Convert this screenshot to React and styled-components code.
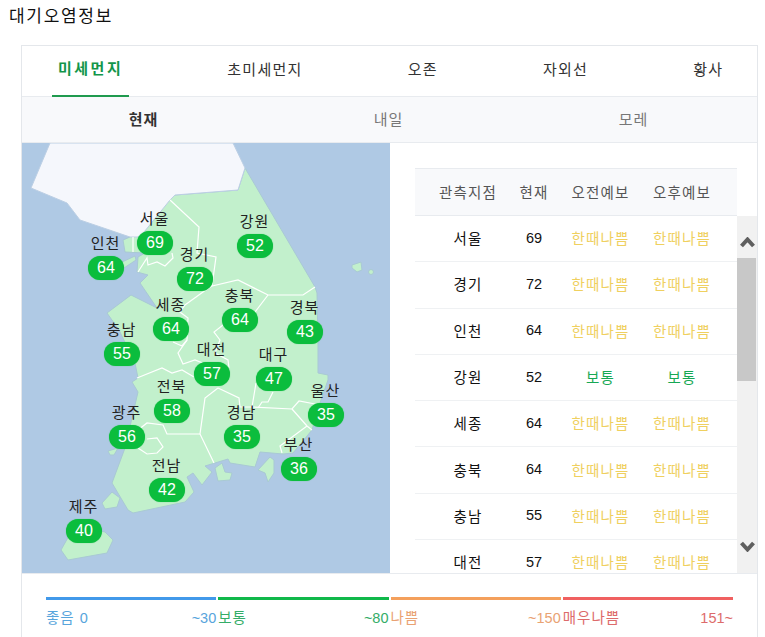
import React from "react";
import styled, { createGlobalStyle } from "styled-components";

const Global = createGlobalStyle`
  html, body { margin: 0; padding: 0; background: #fff; overflow: hidden; height: 637px; }
  * { box-sizing: border-box; }
  body { font-family: "Liberation Sans", "Noto Sans CJK KR", sans-serif; }
`;

const Page = styled.div`
  width: 765px;
  height: 637px;
  overflow: hidden;
  padding: 0 7px 0 21px;
`;
const Title = styled.h2`
  margin: 0 0 0 -12px;
  height: 45px;
  padding-top: 6px;
  font-size: 17px;
  line-height: 22px;
  font-weight: 400;
  letter-spacing: 1.7px;
  color: #111;
`;
const Card = styled.section`
  width: 737px;
  border: 1px solid #e4e7eb;
  height: 640px;
`;
const Tabs = styled.nav`
  display: flex;
  gap: 90px;
  height: 51px;
  padding-left: 30px;
  border-bottom: 1px solid #e8ebef;
`;
const Tab = styled.div`
  height: 51px;
  padding: ${(p) => (p.$active ? "0 6px 7px" : "0 7px 7px 8px")};
  display: flex;
  align-items: center;
  font-size: 15px;
  letter-spacing: ${(p) => (p.$active ? "2.5px" : "1.3px")};
  color: ${(p) => (p.$active ? "#12964a" : "#333")};
  font-weight: ${(p) => (p.$active ? 700 : 400)};
  border-bottom: ${(p) => (p.$active ? "2px solid #1f9a4e" : "none")};
`;
const SubTabs = styled.div`
  display: grid;
  grid-template-columns: repeat(3, 245px);
  height: 46px;
  background: #f8f9fb;
  border-bottom: 1px solid #e8ebef;
`;
const SubTab = styled.div`
  display: flex;
  align-items: center;
  justify-content: center;
  padding: 0 2px 2px 0;
  font-size: 15px;
  letter-spacing: 1px;
  color: ${(p) => (p.$active ? "#333" : "#777")};
  font-weight: ${(p) => (p.$active ? 700 : 400)};
`;
const Main = styled.div`
  display: flex;
  height: 430px;
`;
const MapPane = styled.div`
  position: relative;
  width: 368px;
  height: 430px;
  flex: none;
  background: #afc9e4;
  overflow: hidden;
`;
const MapArt = styled.svg`
  display: block;
  width: 368px;
  height: 430px;
`;
const Pin = styled.div`
  position: absolute;
  left: ${(p) => p.$x - 22 - 25}px;
  top: ${(p) => p.$y - 143 - 36}px;
  width: 50px;
  display: flex;
  flex-direction: column;
  align-items: center;
`;
const PinName = styled.div`
  height: 24px;
  line-height: 24px;
  font-size: 15px;
  letter-spacing: 1px;
  margin-left: -1px;
  color: #222;
  white-space: nowrap;
`;
const PinValue = styled.div`
  width: 36px;
  height: 24px;
  border-radius: 12px;
  background: #0bbd3d;
  box-shadow: 0 0 1px #3fc765;
  color: #fff;
  font-size: 16px;
  line-height: 24px;
  text-align: center;
`;
const TablePane = styled.div`
  flex: 1;
  padding: 25px 0 0 25px;
  display: flex;
  flex-direction: column;
  min-width: 0;
`;
const gridCols = `
  display: grid;
  grid-template-columns: 60px 30px 61px 60px;
  column-gap: 21px;
  padding-left: 23px;
  align-items: center;
  justify-items: center;
`;
const HeadRow = styled.div`
  ${gridCols}
  width: 322px;
  height: 48px;
  flex: none;
  padding-bottom: 2px;
  background: #f8f9fb;
  border-top: 1px solid #e8ebef;
  border-bottom: 1px solid #e8ebef;
`;
const HeadCell = styled.div`
  font-size: 14.5px;
  letter-spacing: 1.1px;
  color: #555;
  white-space: nowrap;
`;
const BodyWrap = styled.div`
  display: flex;
  flex: 1;
  min-height: 0;
  overflow: hidden;
`;
const Rows = styled.div`
  width: 322px;
  flex: none;
  overflow: hidden;
`;
const Row = styled.div`
  ${gridCols}
  height: 46.3px;
  padding-bottom: 2px;
  border-bottom: 1px solid #eff1f3;
`;
const Place = styled.div`
  font-size: 14.5px;
  letter-spacing: 1.1px;
  color: #111;
  white-space: nowrap;
`;
const Num = styled.div`
  font-size: 14.5px;
  color: #111;
`;
const Grade = styled.div`
  font-size: 14.5px;
  letter-spacing: 1.1px;
  white-space: nowrap;
  color: ${(p) => (p.$tone === "normal" ? "#17a854" : "#efd05f")};
`;
const Scrollbar = styled.div`
  width: 20px;
  flex: none;
  background: #f1f1f1;
  display: flex;
  flex-direction: column;
`;
const Arrow = styled.div`
  height: 42px;
  flex: none;
  display: flex;
  justify-content: center;
  align-items: ${(p) => (p.$down ? "flex-end" : "flex-start")};
  padding: ${(p) => (p.$down ? "0 0 21px" : "21px 0 0")};
`;
const Thumb = styled.div`
  height: 123px;
  width: 19px;
  background: #c8c8c8;
  flex: none;
`;
const Spacer = styled.div`
  flex: 1;
`;
const Legend = styled.div`
  display: grid;
  grid-template-columns: repeat(4, 1fr);
  gap: 2px;
  padding: 23px 24px 0;
  border-top: 1px solid #e8ebef;
`;
const LegendItem = styled.div`
  border-top: 3px solid ${(p) => p.$bar};
  padding-top: 8px;
  display: flex;
  justify-content: space-between;
  font-size: 14.5px;
  line-height: 20px;
  color: ${(p) => p.$text};
  white-space: nowrap;
`;
const LegendName = styled.span`
  letter-spacing: 1px;
`;

const land =
  "M170 200L175 195L238 190L245 168L315 287L317 293L318 345L318 373L328 375L328 380L320 403L312 430L293 453L283 454L260 452L255 467L230 463L228 459L215 463L205 466L212 472L202 485L193 473L187 477L194 492L185 502L133 513L128 510L112 483L125 448L138 392L132 382L138 378L135 363L119 330L107 313L131 295L157 308L140 283L148 275L137 272L138 257L145 253L125 252L123 240L130 237Z";
const islands = [
  "M122 262L135 256L136 260L124 268Z",
  "M352 265L361 262L362 270L357 272L352 268Z",
  "M61 550L68 560L107 553L113 540L105 532L75 525Z",
  "M102 503L112 492L120 498L117 507L105 509Z",
  "M108 451L118 448L114 455L110 455Z",
  "M215 468L222 463L225 472L232 473L230 480L218 481Z",
  "M258 470L270 457L274 460L274 473L268 482L265 473Z",
];
const north =
  "M50 143L31 188L67 203L80 220L130 237L140 237L170 200L175 195L238 190L245 168L233 143Z";
const borders = [
  "M170 200L199 227L197 253L216 257L212 286L238 280L268 295L303 295L315 287",
  "M212 286L203 292L185 305L180 312L188 318L187 340L178 353L183 364L195 360L210 366",
  "M133 237L133 252",
  "M138 272L147 258L148 265L157 262L165 266L173 258L172 253",
  "M268 295L255 312L223 325L214 332L220 340L215 353L228 360L229 368",
  "M173 342L182 346L187 340",
  "M137 378L162 368L172 373L182 370L194 377",
  "M218 388L205 398L200 434L214 463",
  "M200 434L167 434L163 425L147 423L138 430",
  "M147 439L157 438L163 447L157 453L147 454L138 448",
  "M218 388L239 398L240 407L252 407L292 409L299 401L315 404",
  "M256 383L252 407",
  "M273 392L268 402L262 402L258 408",
  "M292 409L307 426L312 430",
  "M307 426L280 446L282 453",
];

const pins = [
  ["서울", 69, 155, 243], ["강원", 52, 255, 246], ["인천", 64, 106, 268],
  ["경기", 72, 195, 279], ["세종", 64, 171, 329], ["충북", 64, 240, 320],
  ["경북", 43, 305, 332], ["충남", 55, 122, 354], ["대전", 57, 212, 374],
  ["대구", 47, 274, 379], ["전북", 58, 172, 411], ["울산", 35, 326, 415],
  ["광주", 56, 127, 437], ["경남", 35, 242, 437], ["부산", 36, 299, 469],
  ["전남", 42, 167, 490], ["제주", 40, 84, 531],
];
const rows = [
  ["서울", 69, "한때나쁨"], ["경기", 72, "한때나쁨"], ["인천", 64, "한때나쁨"],
  ["강원", 52, "보통"], ["세종", 64, "한때나쁨"], ["충북", 64, "한때나쁨"],
  ["충남", 55, "한때나쁨"], ["대전", 57, "한때나쁨"],
];
const legend = [
  ["좋음 0", "~30", "#4199ea", "#58a5dc"],
  ["보통", "~80", "#10b84a", "#35ad68"],
  ["나쁨", "~150", "#f4a05c", "#e9a273"],
  ["매우나쁨", "151~", "#f06060", "#dd6b6b"],
];

const Chevron = ({ down }) => (
  <svg width="15" height="11" viewBox="0 0 15 11">
    <polyline
      points={down ? "1.5,2 7.5,8.5 13.5,2" : "1.5,9 7.5,2.5 13.5,9"}
      fill="none"
      stroke="#5f5f5f"
      strokeWidth="4"
    />
  </svg>
);

export default function App() {
  return (
    <Page>
      <Global />
      <Title>대기오염정보</Title>
      <Card>
        <Tabs>
          <Tab $active>미세먼지</Tab>
          <Tab>초미세먼지</Tab>
          <Tab>오존</Tab>
          <Tab>자외선</Tab>
          <Tab>황사</Tab>
        </Tabs>
        <SubTabs>
          <SubTab $active>현재</SubTab>
          <SubTab>내일</SubTab>
          <SubTab>모레</SubTab>
        </SubTabs>
        <Main>
          <MapPane>
            <MapArt viewBox="22 143 368 430">
              <path d={land} fill="#c2f0cc" stroke="#a9c9d4" strokeLinejoin="round" />
              {islands.map((d) => (
                <path key={d} d={d} fill="#c2f0cc" stroke="#a9c9d4" strokeLinejoin="round" />
              ))}
              <circle cx="371" cy="272" r="2.5" fill="#c2f0cc" stroke="#a9c9d4" />
              <path d={north} fill="#f5f7fc" stroke="#bccfe4" strokeLinejoin="round" />
              {borders.map((d) => (
                <path key={d} d={d} fill="none" stroke="#fff" strokeWidth="1.2" />
              ))}
            </MapArt>
            {pins.map(([name, v, x, y]) => (
              <Pin key={name} $x={x} $y={y}>
                <PinName>{name}</PinName>
                <PinValue>{v}</PinValue>
              </Pin>
            ))}
          </MapPane>
          <TablePane>
            <HeadRow>
              <HeadCell>관측지점</HeadCell>
              <HeadCell>현재</HeadCell>
              <HeadCell>오전예보</HeadCell>
              <HeadCell>오후예보</HeadCell>
            </HeadRow>
            <BodyWrap>
              <Rows>
                {rows.map(([name, v, g]) => {
                  const tone = g === "보통" ? "normal" : "bad";
                  return (
                    <Row key={name}>
                      <Place>{name}</Place>
                      <Num>{v}</Num>
                      <Grade $tone={tone}>{g}</Grade>
                      <Grade $tone={tone}>{g}</Grade>
                    </Row>
                  );
                })}
              </Rows>
              <Scrollbar>
                <Arrow>
                  <Chevron />
                </Arrow>
                <Thumb />
                <Spacer />
                <Arrow $down>
                  <Chevron down />
                </Arrow>
              </Scrollbar>
            </BodyWrap>
          </TablePane>
        </Main>
        <Legend>
          {legend.map(([a, b, bar, text]) => (
            <LegendItem key={a} $bar={bar} $text={text}>
              <LegendName>{a}</LegendName>
              <span>{b}</span>
            </LegendItem>
          ))}
        </Legend>
      </Card>
    </Page>
  );
}
